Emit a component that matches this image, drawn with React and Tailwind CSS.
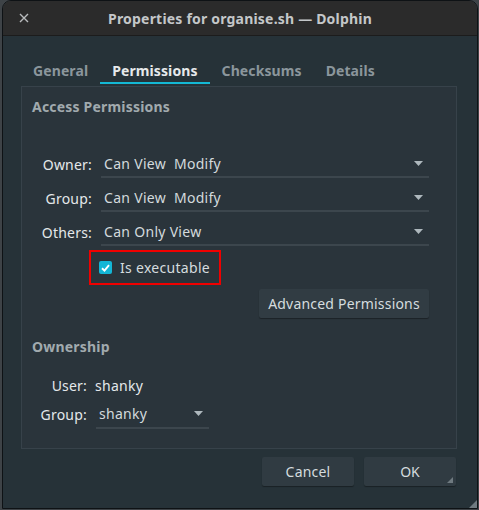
import React from "react";

const font = { fontFamily: '"Noto Sans", "Open Sans", sans-serif' };

function Arrow() {
  return (
    <svg width="9" height="5" viewBox="0 0 9 5" className="shrink-0">
      <path d="M0 0 L9 0 L4.5 5 Z" fill="#aeb8bd" />
    </svg>
  );
}

function Combo({ text, className }) {
  return (
    <div className={"h-[28px] flex items-center justify-between pl-[3px] pr-[6px] border-b-2 border-[#3c464d] text-[#d3dadd] " + className}>
      <span className="whitespace-pre tracking-[0.3px]">{text}</span>
      <Arrow />
    </div>
  );
}

function PermRow({ label, value }) {
  return (
    <div className="flex items-center">
      <div className="w-[60px] text-right text-[#e4e8ea] pt-[1px] tracking-[0.2px]">{label}</div>
      <Combo text={value} className="ml-[9px] w-[328px]" />
    </div>
  );
}

export default function App() {
  return (
    <div className="w-[479px] h-[510px] bg-[#3e4347] pl-[2px] text-[14px]" style={font}>
      <div className="w-[476px] h-[509px] flex flex-col rounded-t-[9px] border border-[#0e1215] overflow-hidden">
        {/* Title bar */}
        <div className="h-[35px] shrink-0 grid grid-cols-[40px_1fr_40px] items-center bg-[#2b2b2b] border-b border-[#1c1c1c]">
          <div className="flex justify-center pl-[1px]">
            <svg width="10" height="10" viewBox="0 0 10 10">
              <path d="M1 1 L9 9 M9 1 L1 9" stroke="#b9bcbe" strokeWidth="1.4" />
            </svg>
          </div>
          <div className="text-center font-bold text-[#c4c7c9] tracking-[0.2px]">Properties for organise.sh — Dolphin</div>
          <div />
        </div>

        {/* Body */}
        <div className="flex-1 bg-[#263238] px-[18px] flex flex-col">
          {/* Tabs */}
          <div className="flex pt-[23px] mb-[2px] font-bold tracking-[0.1px]">
            <div className="h-[25px] px-[12px] flex items-center text-[#8b969c] border-b-2 border-transparent">General</div>
            <div className="h-[25px] px-[12px] flex items-center text-[#e6e9eb] border-b-2 border-[#14b8d4]">Permissions</div>
            <div className="h-[25px] px-[12px] flex items-center text-[#8b969c] border-b-2 border-transparent">Checksums</div>
            <div className="h-[25px] px-[12px] flex items-center text-[#8b969c] border-b-2 border-transparent">Details</div>
          </div>

          {/* Panel */}
          <div className="w-[436px] h-[363px] border border-[#37424a] bg-[#2a343b] pl-[10px] pr-[27px] flex flex-col">
            <div className="mt-[10px] h-[20px] leading-[20px] font-bold text-[#a1aaae] tracking-[0.2px]">Access Permissions</div>

            <div className="mt-[33px] flex flex-col gap-[6px]">
              <PermRow label="Owner:" value="Can View  Modify" />
              <PermRow label="Group:" value="Can View  Modify" />
              <PermRow label="Others:" value="Can Only View" />
            </div>

            <div className="mt-[4px] ml-[57px] w-[132px] h-[35px] border-2 border-[#f00000] flex items-center pl-[8px] gap-[8px]">
              <div className="w-[13px] h-[13px] rounded-[2px] bg-[#13b6d6] flex items-center justify-center">
                <svg width="9" height="8" viewBox="0 0 9 8">
                  <path d="M1 4.2 L3.5 6.6 L8 1.2" stroke="#ffffff" strokeWidth="1.9" fill="none" />
                </svg>
              </div>
              <span className="text-[#d5dcdf] tracking-[0.3px]">Is executable</span>
            </div>

            <div className="mt-[4px] flex justify-end">
              <div className="w-[170px] h-[29px] rounded-[2px] bg-[#313c43] shadow-[0_1px_1px_rgba(0,0,0,0.35)] flex items-center justify-center text-[#d5dcdf] tracking-[0.2px]">
                Advanced Permissions
              </div>
            </div>

            <div className="mt-[19px] h-[20px] leading-[20px] font-bold text-[#a1aaae] tracking-[0.2px]">Ownership</div>

            <div className="mt-[18px] h-[20px] flex items-center">
              <div className="w-[55px] text-right text-[#e4e8ea] tracking-[0.2px]">User:</div>
              <div className="ml-[8px] text-[#e4e8ea] tracking-[0.3px]">shanky</div>
            </div>

            <div className="mt-[5px] flex items-center">
              <div className="w-[55px] text-right text-[#e4e8ea] tracking-[0.2px]">Group:</div>
              <Combo text="shanky" className="ml-[9px] w-[113px] h-[29px]" />
            </div>
          </div>

          {/* Footer */}
          <div className="mt-[8px] flex justify-end gap-[10px] pr-[3px]">
            <div className="w-[92px] h-[29px] rounded-[2px] bg-[#303b42] shadow-[0_1px_1px_rgba(0,0,0,0.35)] flex items-center justify-center text-[#d5dcdf] tracking-[0.2px]">
              Cancel
            </div>
            <div className="relative w-[92px] h-[29px] rounded-[2px] bg-[#303b42] shadow-[0_1px_1px_rgba(0,0,0,0.35)] flex items-center justify-center text-[#d5dcdf]">
              OK
              <svg width="6" height="6" viewBox="0 0 6 6" className="absolute right-[3px] bottom-[3px]">
                <path d="M6 0 L6 6 L0 6 Z" fill="#6f7a80" />
              </svg>
            </div>
          </div>
          <div className="flex-1 relative">
            <svg width="8" height="8" viewBox="0 0 8 8" className="absolute right-[-18px] bottom-0">
              <path d="M8 0 L8 8 L0 8 Z" fill="#6f7a80" />
            </svg>
          </div>
        </div>
      </div>
    </div>
  );
}
